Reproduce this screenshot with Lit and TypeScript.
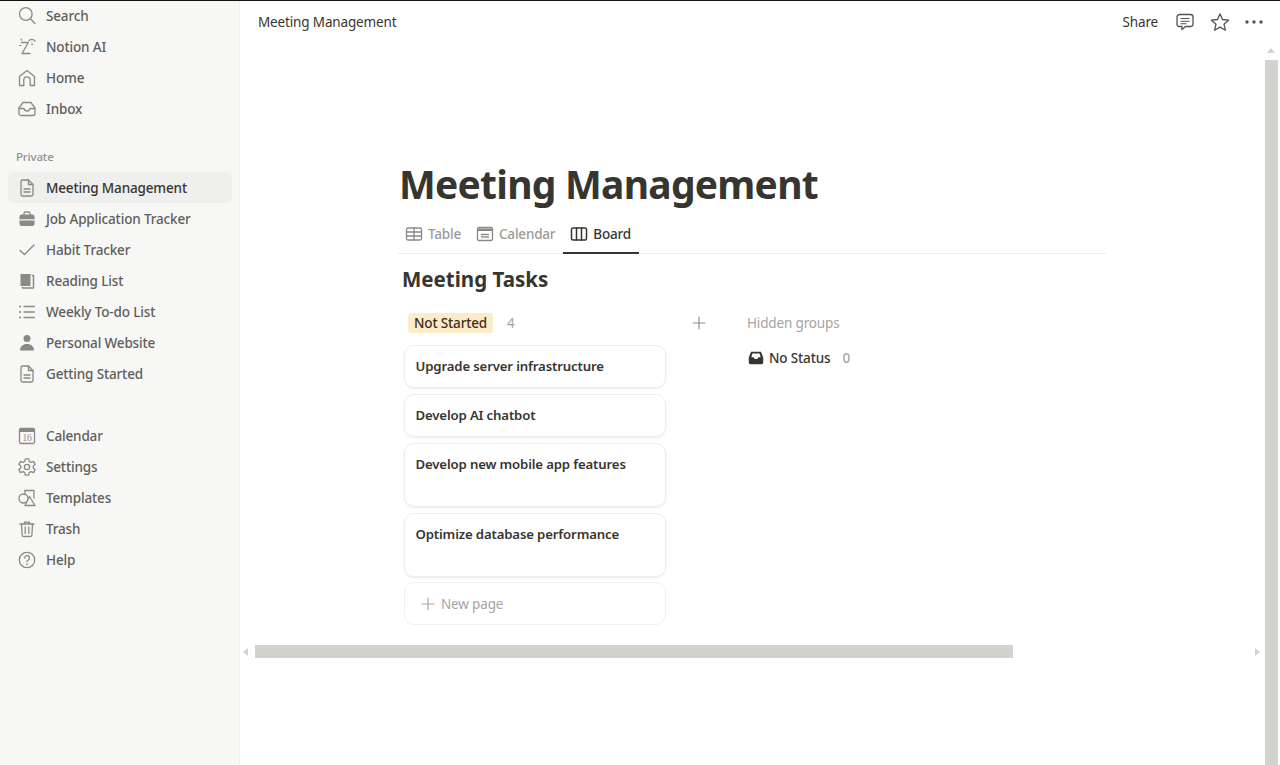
import { LitElement, html, css, svg } from 'lit';
import { customElement } from 'lit/decorators.js';

const icon = (body: unknown, size = 20) => html`<svg width=${size} height=${size} viewBox="0 0 20 20" fill="none" stroke="currentColor" stroke-width="1.3" stroke-linecap="round" stroke-linejoin="round">${body}</svg>`;

const doc = svg`<path d="M4 3.500a1.500 1.500 0 0 1 1.500-1.500h6L16 6.500v10a1.500 1.500 0 0 1-1.500 1.500h-9A1.500 1.500 0 0 1 4 16.500z"/><path d="M11.500 2v4.500H16M7 11h6M7 14h6"/>`;

const icons: Record<string, unknown> = {
  search: svg`<circle cx="8.800" cy="8" r="6.300"/><path d="M13.500 12.700l4.500 4.800"/>`,
  ai: svg`<path d="M4.500 5.500h6.800L5 16.500h8M12 3.500c2-1.500 4.500-1.300 6 .5"/><path d="M4 2l.8 1.300M14.500 7l1.200.5M2.500 8.500h1.500M15 4.800h.01" stroke-width="1.100"/>`,
  home: svg`<path d="M2.500 17.500V8.500L10 2.500l7.500 6v9h-4.300v-5.500a3.200 3.200 0 0 0-6.400 0v5.500z"/>`,
  inbox: svg`<path d="M2 9l4-5.500h8L18 9v5.500a2 2 0 0 1-2 2H4a2 2 0 0 1-2-2z"/><path d="M2 9.500h5c.5 2 1.500 2.500 3 2.500s2.500-.5 3-2.500h5"/>`,
  doc,
  job: svg`<path d="M7 6V4.500A1.500 1.500 0 0 1 8.500 3h3A1.500 1.500 0 0 1 13 4.500V6" /><rect x="2.500" y="5.500" width="15" height="11.500" rx="2.200" fill="currentColor" stroke="none"/><path d="M2.800 10.800h14.400" stroke="#f7f7f5"/>`,
  check: svg`<path d="M3 10.500l4.500 4L17 5" stroke-width="1.400"/>`,
  book: svg`<path d="M3.500 3h10v12h-10z" fill="currentColor" stroke="none"/><path d="M15.300 4.500h1.200V17H5.500v-.6" stroke-width="1.500"/>`,
  list: svg`<path d="M7 4.500h10.500M7 10h10.500M7 15.500h10.500"/><path d="M3 4.500h.1M3 10h.1M3 15.500h.1" stroke-width="2"/>`,
  person: svg`<circle cx="10" cy="5.500" r="3.500" fill="currentColor" stroke="none"/><path d="M3 17.500c0-4 3-6.500 7-6.500s7 2.500 7 6.500z" fill="currentColor" stroke="none"/>`,
  calendar: svg`<rect x="2.500" y="2.500" width="15" height="15" rx="1.500"/><path d="M2.500 3h15v3h-15z" fill="currentColor" stroke="none"/><text x="10" y="15" text-anchor="middle" font-family="Liberation Serif, serif" font-size="9.500" fill="currentColor" stroke="none">16</text>`,
  gear: svg`<circle cx="10" cy="10" r="2.600"/><path d="M8.300 1.800h3.400l.5 2.500 1.900 1 2.400-.9 1.700 2.900-1.900 1.700v2l1.900 1.700-1.700 2.900-2.400-.9-1.900 1-.5 2.500H8.300l-.5-2.500-1.900-1-2.400.9-1.700-2.900 1.900-1.700v-2L1.800 7.300l1.700-2.900 2.400.9 1.900-1z"/>`,
  templates: svg`<circle cx="6.500" cy="10.500" r="4.500"/><path d="M8 2.500h9v7.500"/><path d="M8 2.500v3.800"/><path d="M12.500 8.500l5.500 9H8z" fill="#f7f7f5"/>`,
  trash: svg`<path d="M3 5h14M7.500 5V3.200h5V5M4.500 5l.6 11a1.500 1.500 0 0 0 1.500 1.500h6.800a1.500 1.500 0 0 0 1.500-1.500l.6-11M8.200 8v6.500M11.800 8v6.500"/>`,
  help: svg`<circle cx="10" cy="10" r="7.700"/><path d="M7.700 8a2.400 2.400 0 1 1 3.600 2c-.9.500-1.300 1-1.300 1.800"/><path d="M10 14.300h.01" stroke-width="1.800"/>`,
};

const topItems = [['search', 'Search'], ['ai', 'Notion AI'], ['home', 'Home'], ['inbox', 'Inbox']];
const privateItems = [
  ['doc', 'Meeting Management'], ['job', 'Job Application Tracker'], ['check', 'Habit Tracker'],
  ['book', 'Reading List'], ['list', 'Weekly To-do List'], ['person', 'Personal Website'], ['doc', 'Getting Started'],
];
const bottomItems = [['calendar', 'Calendar'], ['gear', 'Settings'], ['templates', 'Templates'], ['trash', 'Trash'], ['help', 'Help']];
const cards = [
  ['Upgrade server infrastructure', false],
  ['Develop AI chatbot', false],
  ['Develop new mobile app features', true],
  ['Optimize database performance', true],
] as const;

@customElement('app-root')
export class AppRoot extends LitElement {
  static override styles = css`
    :host {
      display: flex;
      width: 1280px;
      height: 765px;
      overflow: hidden;
      position: relative;
      box-sizing: border-box;
      border-top: 1px solid #111;
      background: #fff;
      color: #37352f;
      font-family: "Noto Sans", "Open Sans", sans-serif;
      font-size: 13.500px;
      letter-spacing: -0.15px;
    }
    svg { display: block; flex: none; }

    .sidebar {
      width: 240px;
      flex: none;
      box-sizing: border-box;
      background: #f7f7f5;
      border-right: 1px solid #efefed;
      padding: 0 7px 0 8px;
      margin-top: -1px;
    }
    .item {
      display: flex;
      align-items: center;
      height: 31px;
      gap: 9px;
      padding-left: 9px;
      border-radius: 6px;
      color: #5f5e5b;
      font-weight: 500;
      white-space: nowrap;
    }
    .item svg { color: #8a8985; }
    .item.active { background: #efefed; color: #37352f; }
    .label { height: 31px; margin-top: 17px; display: flex; align-items: center; padding-left: 8px; font-size: 11.500px; color: #91918e; font-weight: 500; }
    .gap { height: 31px; }

    .main { flex: 1; min-width: 0; display: flex; flex-direction: column; }
    .topbar {
      display: flex;
      align-items: center;
      height: 42px;
      padding: 0 16px 0 18px;
    }
    .crumb { flex: 1; }
    .share { margin-right: 17px; }
    .topbar svg { color: #55534e; }
    .star { margin-left: 15px; }
    .dots { margin-left: 14px; }

    .page { padding: 114px 174px 0 158px; }
    h1 { margin: 0 0 0 1px; font-size: 39px; line-height: 54px; font-weight: 700; color: #37352f; letter-spacing: -0.75px; }
    .tabs {
      display: flex;
      height: 43px;
      border-bottom: 1px solid #ededeb;
      box-sizing: border-box;
    }
    .tab {
      display: flex;
      align-items: center;
      gap: 4px;
      padding: 4px 8px 0 6px;
      color: #9b9a97;
      font-weight: 500;
      letter-spacing: -0.2px;
      margin-bottom: -1px;
      box-sizing: border-box;
      border-bottom: 2px solid transparent;
    }
    .tab svg { color: #8a8985; }
    .tab.on { color: #37352f; border-bottom-color: #37352f; }
    .tab.on svg { color: #37352f; }
    h2 { margin: 9px 0 0 4px; font-size: 20.500px; line-height: 32px; font-weight: 700; letter-spacing: 0; }

    .board { display: flex; margin: 11px 0 0 6px; }
    .col { width: 262px; }
    .col-head { display: flex; align-items: center; height: 34px; gap: 14px; padding-left: 4px; }
    .pill { background: #fdecc8; color: #402c1b; border-radius: 3px; padding: 0 6px; line-height: 20px; font-weight: 500; }
    .count { color: #a5a4a1; }
    .card {
      box-sizing: border-box;
      border-radius: 10px;
      border: 1px solid #ededeb;
      box-shadow: 0 1px 2px rgba(15, 15, 15, 0.08);
      padding: 10px 10.500px;
      height: 43px;
      margin-top: 6px;
      line-height: 20px;
      font-weight: 600;
      font-size: 13.200px;
      color: #37352f;
    }
    .col-head + .card { margin-top: 5px; }
    .card.tall { height: 64px; }
    .new {
      display: flex;
      align-items: center;
      gap: 4px;
      box-sizing: border-box;
      height: 43px;
      margin-top: 5px;
      padding-left: 14px;
      border: 1px solid #f1f1ef;
      border-radius: 10px;
      color: #a5a4a1;
    }
    .add { width: 80px; height: 34px; display: flex; align-items: center; padding-left: 24px; box-sizing: border-box; color: #8f8e8a; }
    .hidden-groups { padding-left: 1px; }
    .hidden-title { height: 34px; display: flex; align-items: center; color: #a5a4a1; }
    .status { display: flex; align-items: center; gap: 4px; height: 34px; margin-top: 1px; font-weight: 500; }
    .status .count { margin-left: 8px; }

    .hbar { position: absolute; left: 255px; top: 644px; width: 758px; height: 13px; background: #d3d3ce; }
    .vbar { position: absolute; left: 1265px; top: 59px; width: 13px; height: 706px; background: #d3d3ce; }
    .arrow { position: absolute; width: 0; height: 0; border: 4px solid transparent; }
    .up { left: 1267px; top: 47px; border-bottom-color: #d3d3ce; border-top-width: 0; border-bottom-width: 5px; }
    .lft { left: 243px; top: 647px; border-right-color: #d3d3ce; border-left-width: 0; border-right-width: 5px; }
    .rgt { left: 1255px; top: 647px; border-left-color: #d3d3ce; border-right-width: 0; border-left-width: 5px; }
  `;

  private _item([name, text]: string[], active = false) {
    return html`<div class="item ${active ? 'active' : ''}">${icon(icons[name])}<span>${text}</span></div>`;
  }

  override render() {
    return html`
      <nav class="sidebar">
        ${topItems.map((i) => this._item(i))}
        <div class="label">Private</div>
        ${privateItems.map((i, n) => this._item(i, n === 0))}
        <div class="gap"></div>
        ${bottomItems.map((i) => this._item(i))}
      </nav>
      <div class="main">
        <header class="topbar">
          <span class="crumb">Meeting Management</span>
          <span class="share">Share</span>
          ${icon(svg`<path d="M4.500 2.500h11a2.500 2.500 0 0 1 2.500 2.500v7a2.500 2.500 0 0 1-2.500 2.500H10.500l-3.500 3v-3H4.500A2.500 2.500 0 0 1 2 12V5a2.500 2.500 0 0 1 2.500-2.500z"/><path d="M6 6.500h8M6 9.300h8M6 11.800h5" stroke-width="1.100"/>`)}
          <span class="star">${icon(svg`<path d="M10 1.800l2.500 5.700 6.200.6-4.700 4.100 1.400 6L10 15.100l-5.400 3.100 1.400-6-4.700-4.100 6.200-.6z"/>`)}</span>
          <span class="dots">${icon(svg`<circle cx="3" cy="10" r="1.700" fill="currentColor" stroke="none"/><circle cx="10" cy="10" r="1.700" fill="currentColor" stroke="none"/><circle cx="17" cy="10" r="1.700" fill="currentColor" stroke="none"/>`)}</span>
        </header>
        <div class="page">
          <h1>Meeting Management</h1>
          <div class="tabs">
            <div class="tab">${icon(svg`<rect x="2.500" y="4" width="15" height="12" rx="1.500"/><path d="M2.500 8h15M2.500 12h15M10 4v12"/>`)}Table</div>
            <div class="tab">${icon(svg`<rect x="2.500" y="3.500" width="15" height="13" rx="1.500"/><path d="M2.500 4.500h15V7h-15z" fill="currentColor" stroke="none"/><path d="M6.500 10.500h7M6.500 13h7" stroke-dasharray="1 1"/>`)}Calendar</div>
            <div class="tab on">${icon(svg`<rect x="2.500" y="4" width="15" height="12" rx="1.500" stroke-width="1.500"/><path d="M7.500 4v12M12.500 4v12" stroke-width="1.500"/>`)}Board</div>
          </div>
          <h2>Meeting Tasks</h2>
          <div class="board">
            <div class="col">
              <div class="col-head"><span class="pill">Not Started</span><span class="count">4</span></div>
              ${cards.map(([t, tall]) => html`<div class="card ${tall ? 'tall' : ''}">${t}</div>`)}
              <div class="new">${icon(svg`<path d="M10 3.500v13M3.500 10h13"/>`, 18)}New page</div>
            </div>
            <div class="add">${icon(svg`<path d="M10 3.500v13M3.500 10h13"/>`, 18)}</div>
            <div class="hidden-groups">
              <div class="hidden-title">Hidden groups</div>
              <div class="status">
                ${icon(svg`<path d="M4.500 3h11l2.500 6.500V15a2 2 0 0 1-2 2H4a2 2 0 0 1-2-2V9.500z" fill="currentColor" stroke="none"/><path d="M4.800 9.200 6 5h8l1.200 4.200h-2.600c-.4 1.500-1.300 2-2.600 2s-2.200-.5-2.600-2z" fill="#fff" stroke="none"/>`, 18)}
                <span>No Status</span><span class="count">0</span>
              </div>
            </div>
          </div>
        </div>
      </div>
      <div class="hbar"></div>
      <div class="vbar"></div>
      <div class="arrow up"></div>
      <div class="arrow lft"></div>
      <div class="arrow rgt"></div>
    `;
  }
}
